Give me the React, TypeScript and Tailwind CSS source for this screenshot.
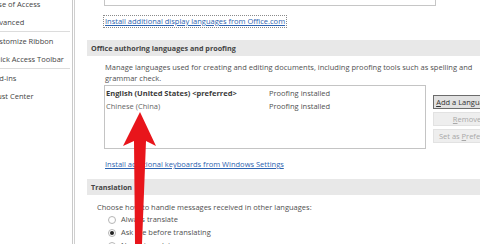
import React from "react";

const navItems = [
  ["Ease of Access", "Advanced"],
  ["Customize Ribbon", "Quick Access Toolbar"],
  ["Add-ins", "Trust Center"],
];

function Radio({ checked, label }: { checked?: boolean; label: string }) {
  return (
    <div className="flex h-[13px] items-center pl-[21px]">
      <span className="flex h-[8px] w-[8px] items-center justify-center rounded-full border border-[#b5b5b5] bg-white">
        {checked && <span className="h-[4px] w-[4px] rounded-full bg-[#222]" />}
      </span>
      <span className="ml-[5px]">{label}</span>
    </div>
  );
}

function SideButton({ label, under, focused }: { label: string; under: number; focused?: boolean }) {
  return (
    <div
      className={`flex h-[14px] w-[68px] items-center justify-center border ${
        focused ? "border-[#6b6b6b] bg-[#e1e1e1] text-[#333]" : "border-[#e2e2e2] bg-[#eeeeee] text-[#a8a8a8]"
      }`}
    >
      <span className="whitespace-nowrap">
        {label.slice(0, under)}
        <span className="underline">{label[under]}</span>
        {label.slice(under + 1)}
      </span>
    </div>
  );
}

export default function App() {
  return (
    <div
      className="relative flex h-[244px] w-[480px] overflow-hidden bg-white text-[7.5px] leading-[11px] text-[#505050]"
      style={{ fontFamily: '"Open Sans", "Noto Sans", sans-serif' }}
    >
      {/* left nav */}
      <div className="w-[73px] shrink-0 overflow-hidden border-r border-[#c9c9c9]">
        <div className="ml-[-10px] mt-[-5px] w-[80px] text-[#444]">
          {navItems.map((group, i) => (
            <div key={i} className={i < navItems.length - 1 ? "border-b border-[#dcdcdc]" : ""}>
              {group.map((item) => (
                <div key={item} className="flex h-[18px] items-center whitespace-nowrap">
                  {item}
                </div>
              ))}
            </div>
          ))}
        </div>
      </div>
      <div className="ml-[1px] w-px shrink-0 bg-[#cfcfcf]" />

      {/* main */}
      <div className="flex-1 pl-[12px]">
        <div className="mt-[-14px] ml-[17px] h-[20px] w-[332px] border border-[#c6c6c6]" />

        <div className="ml-[16px] mt-[9px] inline-flex h-[13px] items-center border border-dotted border-[#8a8a8a] px-[1px]">
          <span className="whitespace-nowrap text-[#2d63b0] underline">Install additional display languages from Office.com</span>
        </div>

        <div className="mt-[12px] flex h-[16px] items-center bg-[#e8e8e8] pl-[4px] text-[7.2px] font-bold text-[#444]">
          Office authoring languages and proofing
        </div>

        <div className="ml-[18px] mt-[6px] whitespace-nowrap">
          Manage languages used for creating and editing documents, including proofing tools such as spelling and
          <br />
          grammar check.
        </div>

        <div className="ml-[17px] mt-[1px] flex">
          <div className="h-[64px] w-[322px] border border-[#c4c4c4] pt-[1px]">
            <div className="flex h-[13px] items-center">
              <span className="w-[164px] pl-[1px] font-bold text-[#3a3a3a]">English (United States) &lt;preferred&gt;</span>
              <span>Proofing installed</span>
            </div>
            <div className="flex h-[13px] items-center">
              <span className="w-[164px] pl-[1px] text-[#666]">Chinese (China)</span>
              <span>Proofing installed</span>
            </div>
          </div>
          <div className="ml-[7px] mt-[10px] flex flex-col gap-[3px]">
            <SideButton label="Add a Language..." under={0} focused />
            <SideButton label="Remove" under={0} />
            <SideButton label="Set as Preferred" under={7} />
          </div>
        </div>

        <div className="ml-[18px] mt-[9px] flex h-[13px] items-center">
          <span className="whitespace-nowrap text-[#2d63b0] underline">Install additional keyboards from Windows Settings</span>
        </div>

        <div className="mt-[8px] flex h-[16px] items-center bg-[#e8e8e8] pl-[4px] text-[7.2px] font-bold text-[#444]">
          Translation
        </div>

        <div className="ml-[10px] mt-[6px] flex h-[12px] items-center">
          Choose how to handle messages received in other languages:
        </div>
        <Radio label="Always translate" />
        <Radio label="Ask me before translating" checked />
        <Radio label="Never translate" />
      </div>

      {/* red arrow overlay */}
      <svg className="pointer-events-none absolute left-0 top-0" width="480" height="244" viewBox="0 0 480 244">
        <polygon points="140,112 156,146 146,141 142,244 135,244 134,141 123,146" fill="#e8151b" />
      </svg>
    </div>
  );
}
